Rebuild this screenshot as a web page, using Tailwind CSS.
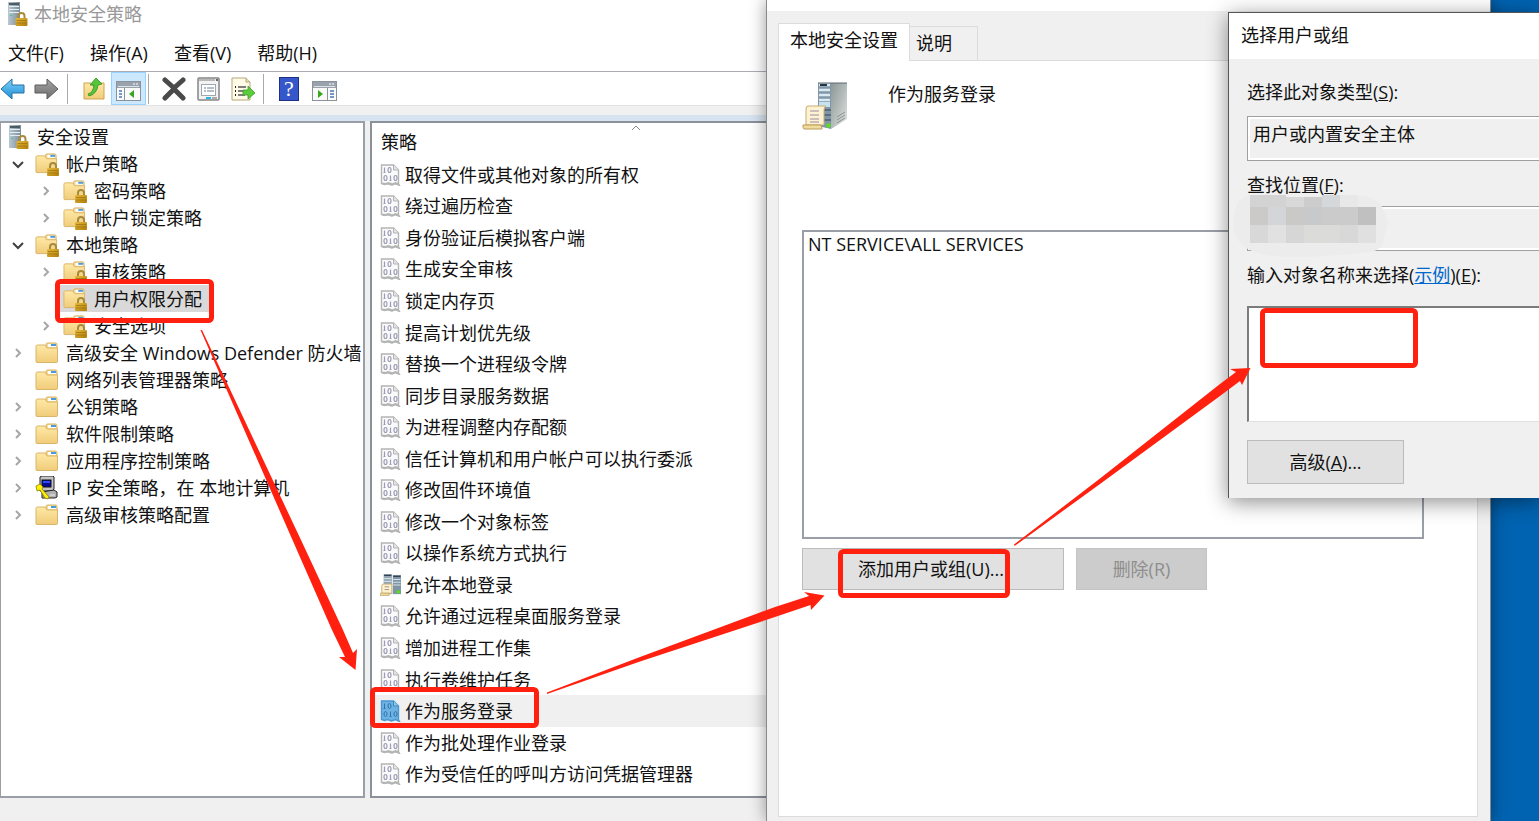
<!DOCTYPE html>
<html lang="zh-CN">
<head>
  <meta charset="UTF-8" />
  <title>本地安全策略</title>
  <meta name="viewport" content="width=device-width, initial-scale=1.0" />
  <script src="https://cdn.jsdelivr.net/npm/@tailwindcss/browser@4"></script>
</head>
<body class="relative h-screen overflow-hidden bg-[#0063b1] font-['Open_Sans','Noto_Sans_CJK_SC',sans-serif] text-[18px] leading-6 text-[#111]">

  <!-- Iconos compartidos -->
  <svg class="absolute h-0 w-0" aria-hidden="true">
    <defs>
      <linearGradient id="gFolder" x1="0" y1="0" x2="0" y2="1"><stop offset="0" stop-color="#ffe9a6"/><stop offset="1" stop-color="#f0cc7a"/></linearGradient>
      <linearGradient id="gLock" x1="0" y1="0" x2="1" y2="1"><stop offset="0" stop-color="#e6b93a"/><stop offset="1" stop-color="#b07d08"/></linearGradient>
      <linearGradient id="gServer" x1="0" y1="0" x2="1" y2="0"><stop offset="0" stop-color="#b9c8d2"/><stop offset="1" stop-color="#7b8c98"/></linearGradient>
      <linearGradient id="gSide" x1="0" y1="0" x2="1" y2="1"><stop offset="0" stop-color="#8d9795"/><stop offset=".5" stop-color="#b4bcba"/><stop offset="1" stop-color="#e3e6e5"/></linearGradient>
      <linearGradient id="gBlue" x1="0" y1="0" x2="0" y2="1"><stop offset="0" stop-color="#7fd0f8"/><stop offset="1" stop-color="#1c8fd8"/></linearGradient>
      <linearGradient id="gGray" x1="0" y1="0" x2="0" y2="1"><stop offset="0" stop-color="#a5a5a5"/><stop offset="1" stop-color="#6c6c6c"/></linearGradient>
    </defs>
    <symbol id="lock" viewBox="0 0 12 14">
      <path d="M3 7V4a3 3 0 0 1 6 0v3" fill="none" stroke="#a88a3c" stroke-width="2"/>
      <rect x="0" y="6" width="12" height="8" rx="1" fill="url(#gLock)"/>
      <path d="M1 8.500h10M1 11h10" stroke="#8f6a0c" stroke-width=".6"/>
    </symbol>
    <symbol id="folder" viewBox="0 0 24 24">
      <path d="M11 5V3.500q0-1.500 1.500-1.500h8q1.500 0 1.500 1.500V8H11z" fill="#f5d991" stroke="#d6b264"/>
      <rect x="13" y="3" width="8" height="3" fill="#fff"/><rect x="16" y="3" width="5" height="2" fill="#4a9ae0"/>
      <path d="M1 5.500Q1 4 2.500 4H10l2 3h10.500v13.500q0 1-1 1H2q-1 0-1-1z" fill="url(#gFolder)" stroke="#d9b56a"/>
    </symbol>
    <symbol id="folder-lock" viewBox="0 0 24 24">
      <use href="#folder" x="0" y="0" width="23" height="23"/>
      <use href="#lock" x="12" y="10" width="12" height="14"/>
    </symbol>
    <symbol id="server-lock" viewBox="0 0 20 24">
      <rect x="0" y="0" width="12" height="23" fill="url(#gServer)"/>
      <path d="M1 1h10v2H1z" fill="#4e5c66"/><path d="M1 4.500h10M1 7.500h10M1 10.500h10" stroke="#e4edf2" stroke-width="1"/>
      <rect x="2" y="13" width="2" height="1" fill="#4c7"/>
      <use href="#lock" x="7" y="10" width="13" height="14"/>
    </symbol>
    <symbol id="doc" viewBox="0 0 20 22">
      <path d="M1 1h12l5 5v14l1 1.500-4-2-4 1.500-4-1.500-3 1-3-1z" fill="#fafafa" stroke="currentColor" stroke-width="1.400"/>
      <path d="M13 1v5h5" fill="#e4e4e4" stroke="currentColor"/>
      <path d="M2 19.500l3 .5 3-1 4 1.500 3-1.500 3 1" fill="none" stroke="currentColor" stroke-width="2"/>
      <g fill="none" stroke="#9c9bb8" stroke-width="1.200">
        <path d="M4 3.500v5M3 8.500h2"/><ellipse cx="9" cy="6" rx="1.500" ry="2.500"/>
        <ellipse cx="5" cy="14" rx="1.500" ry="2.500"/><path d="M10 11.500v5M9 16.500h2"/><ellipse cx="15" cy="14" rx="1.500" ry="2.500"/>
      </g>
    </symbol>
    <symbol id="doc-blue" viewBox="0 0 20 22">
      <path d="M1 1h12l5 5v14l1 1.500-4-2-4 1.500-4-1.500-3 1-3-1z" fill="#6db2e2" stroke="#4a98d0" stroke-width="1.400"/>
      <path d="M13 1v5h5" fill="#8cc6ec" stroke="#3f8cc4"/>
      <g fill="none" stroke="#2f74ac" stroke-width="1">
        <path d="M4 3.500v5M3 8.500h2"/><ellipse cx="9" cy="6" rx="1.500" ry="2.500"/>
        <ellipse cx="5" cy="14" rx="1.500" ry="2.500"/><path d="M10 11.500v5M9 16.500h2"/><ellipse cx="15" cy="14" rx="1.500" ry="2.500"/>
      </g>
    </symbol>
    <symbol id="server-doc" viewBox="0 0 46 48">
      <path d="M16 1l13 0v46l-13-3z" fill="#8197a8"/>
      <path d="M29 1h16v36L29 47z" fill="url(#gSide)"/>
      <path d="M16 1h29" stroke="#5d6a70" stroke-width="1"/>
      <path d="M17 3h11M17 8h11M17 13h11M17 18h11" stroke="#dbe9f1" stroke-width="2.500"/>
      <path d="M18 3h7" stroke="#26343d" stroke-width="2"/>
      <path d="M17 20h11v5H17z" fill="#c6e2ef"/>
      <path d="M22 28h7M22 33h7M22 38h7" stroke="#4d6274" stroke-width="1.500"/>
      <path d="M35 38l8-5M35 41l8-5M35 35l8-5" stroke="#8a9391" stroke-width="1"/>
      <circle cx="26.500" cy="43.500" r="2.200" fill="#5bdc1c"/>
      <path d="M6 24h18q-2 1-2 4v15H4V27q0-3 2-3z" fill="#fdf3d3" stroke="#c9ac72"/>
      <path d="M8 29h9M8 33h9M8 37h9M8 40h9" stroke="#a08aa0" stroke-width="1.200"/>
      <path d="M1 43h17q2 0 2 4H2q-1.500-1.500-1-4z" fill="#f1dc9c" stroke="#b89b5c"/>
    </symbol>
    <symbol id="server-pair" viewBox="0 0 23 24">
      <path d="M4 0h9v22H4z" fill="#93a7b5"/><path d="M14 1h9v21h-9z" fill="#7f94a4"/>
      <path d="M4.500 1.500h8M14.500 2.500h8" stroke="#33434f" stroke-width="1.500"/>
      <path d="M4.500 5h8M4.500 8h8M14.500 6h8M14.500 9h8M14.500 12h8" stroke="#dfeaf0" stroke-width="1"/>
      <rect x="18" y="18" width="4" height="3" fill="#5bdc1c"/>
      <path d="M3 11h10v10H2V12z" fill="#fdf3d3" stroke="#c9ac72"/><path d="M5 14h5M5 17h5" stroke="#a08a70"/>
      <path d="M0 21h10v2.500H0z" fill="#f1dc9c" stroke="#b89b5c" stroke-width=".7"/>
    </symbol>
    <symbol id="ipsec" viewBox="0 0 24 24">
      <path d="M5 1l2-1h11l1 1v12l-2 2H5z" fill="#c4c4c4" stroke="#222"/>
      <rect x="7" y="4" width="9" height="7" fill="#0a0a90" stroke="#111"/><path d="M8 6h7" stroke="#2a4dff" stroke-width="2"/>
      <path d="M7 16l12-2 3 2v5l-2 1H7z" fill="#b0b0b0" stroke="#222"/><path d="M15 19h5" stroke="#eee"/>
      <path d="M1 10l4-2 3 3-1 2 7 8-1 2-3-1-5-8-3 1z" fill="#fff200" stroke="#8a8200" stroke-width=".8"/>
    </symbol>
  </svg>

  <!-- Consola principal -->
  <main class="absolute inset-y-0 left-0 flex w-[768px] flex-col bg-[#f0f0f0]">
    <header class="flex h-[27px] items-center gap-[6px] bg-white pl-2">
      <svg class="h-6 w-5"><use href="#server-lock"/></svg>
      <h1 class="text-[#999]">本地安全策略</h1>
    </header>
    <nav class="flex h-11 items-center gap-[26px] bg-white pt-2 pl-2">
      <button>文件(F)</button>
      <button>操作(A)</button>
      <button>查看(V)</button>
      <button>帮助(H)</button>
    </nav>
    <div class="flex h-[35px] items-center border-t border-b border-t-[#a9adb2] border-b-[#e3e3e3] bg-white">
      <button aria-label="后退" class="mr-[9px]">
        <svg class="h-6 w-[25px]" viewBox="0 0 25 24"><path d="M1 12L12 2v6h12v8H12v6z" fill="url(#gBlue)" stroke="#2b6f9f"/></svg>
      </button>
      <button aria-label="前进" class="mr-2">
        <svg class="h-6 w-[25px]" viewBox="0 0 25 24"><path d="M24 12L13 2v6H1v8h12v6z" fill="url(#gGray)" stroke="#5b5b5b"/></svg>
      </button>
      <span class="mr-[15px] h-[30px] w-px bg-[#aaa]"></span>
      <button aria-label="向上" class="mr-[6px]">
        <svg class="h-6 w-[22px]" viewBox="0 0 22 24">
          <path d="M1 6h7l2 3 2-3h9v16H1z" fill="url(#gFolder)" stroke="#cda54c"/>
          <path d="M5 17q5-1 6-9H7l6-7 6 6-4 1q-1 9-9 11z" fill="#55c53a" stroke="#2f8f22" stroke-width=".8"/>
        </svg>
      </button>
      <button aria-label="显示/隐藏控制台树" class="mr-[2px] flex h-[33px] w-[35px] items-center justify-center border border-[#99d1ff] bg-[#cce8ff]">
        <svg class="mt-1 h-5 w-[25px]" viewBox="0 0 25 20">
          <rect x=".5" y=".5" width="24" height="19" fill="#fafafa" stroke="#8a939b"/>
          <rect x="1" y="1" width="23" height="6" fill="#9aa3ac"/><path d="M2 5.500h21" stroke="#dde3e8"/><path d="M17 3h2M20 3h2" stroke="#fff"/>
          <path d="M3 10h3M3 13h3M3 16h3" stroke="#4a79b5" stroke-width="1.500"/><path d="M8.500 7v12" stroke="#8a939b"/>
          <path d="M18 9v8l-5-4z" fill="#39a51f"/>
        </svg>
      </button>
      <span class="mr-[12px] h-[30px] w-px bg-[#aaa]"></span>
      <button aria-label="删除" class="mr-[10px]">
        <svg class="h-6 w-[26px]" viewBox="0 0 26 24"><path d="M4 3l9 8 9-8M4 21l9-9 9 9" fill="none" stroke="#4a4a4a" stroke-width="5" stroke-linecap="round" stroke-linejoin="round"/></svg>
      </button>
      <button aria-label="属性" class="mr-[11px]">
        <svg class="h-6 w-[23px]" viewBox="0 0 23 24">
          <rect x="1" y="1" width="21" height="22" rx="1" fill="#f3f3f3" stroke="#858585" stroke-width="1.500"/>
          <path d="M2 3h16" stroke="#b8b8b8" stroke-width="2"/><path d="M19 3h2" stroke="#666" stroke-width="2"/>
          <rect x="4.500" y="7.500" width="14" height="11" fill="#fff" stroke="#9da8b5"/>
          <path d="M7 11h2M7 14h2M10 11h7M10 14h7" stroke="#6a7d94"/><path d="M9 21h5" stroke="#25b5e8" stroke-width="2"/><path d="M15 21h5" stroke="#aaa" stroke-width="2"/>
        </svg>
      </button>
      <button aria-label="导出列表" class="mr-[7px]">
        <svg class="h-6 w-[25px]" viewBox="0 0 25 24">
          <path d="M1 1h14l4 4v18H1z" fill="#fffbe6" stroke="#b5a878"/><path d="M15 1v4h4" fill="#e9dfb8" stroke="#b5a878"/>
          <path d="M7 10h8M7 14h7M7 18h7" stroke="#555" stroke-width="1.500"/><path d="M4 10h1M4 14h1M4 18h1" stroke="#222" stroke-width="2"/>
          <path d="M12 13h5v-4l7 7-7 6v-4h-5z" fill="#5ccb3c" stroke="#3c9c28" stroke-width=".8"/>
        </svg>
      </button>
      <span class="mr-[15px] h-[30px] w-px bg-[#aaa]"></span>
      <button aria-label="帮助" class="mr-[13px] flex h-6 w-5 items-center justify-center border border-[#1d2f86] bg-[#3557c9] font-['Liberation_Serif',serif] text-[22px] text-white">?</button>
      <button aria-label="显示/隐藏操作窗格">
        <svg class="mt-1 h-5 w-[25px]" viewBox="0 0 25 20">
          <rect x=".5" y=".5" width="24" height="19" fill="#fafafa" stroke="#8a939b"/>
          <rect x="1" y="1" width="23" height="6" fill="#9aa3ac"/><path d="M2 5.500h21" stroke="#dde3e8"/><path d="M17 3h2M20 3h2" stroke="#fff"/>
          <path d="M18 10h4M18 13h4M18 16h4" stroke="#4a79b5" stroke-width="1.500"/><path d="M15.500 7v12" stroke="#8a939b"/>
          <path d="M6 9v8l5-4z" fill="#39a51f"/>
        </svg>
      </button>
    </div>
    <div class="mt-[9px] h-[6px] bg-[#d6e3f0]"></div>

    <div class="mb-[23px] flex min-h-0 flex-1 gap-[5px]">
      <ul id="tree" class="w-[365px] border-2 border-l border-[#9a9ea6] bg-white whitespace-nowrap"></ul>
      <div class="relative flex-1 border-y-2 border-l-2 border-[#8b9099] bg-white pb-[6px]">
        <svg class="absolute top-[2px] left-[259px] h-[6px] w-[10px]" viewBox="0 0 10 6"><path d="M1 5l4-4 4 4" fill="none" stroke="#888"/></svg>
        <table class="h-full w-full">
          <thead><tr class="h-[36px]"><th class="pt-[2px] pl-[9px] text-left font-normal">策略</th></tr></thead>
          <tbody id="policies"></tbody>
        </table>
      </div>
    </div>
  </main>

  <!-- Propiedades -->
  <section class="absolute inset-y-0 left-[766px] flex w-[725px] flex-col border-x border-[#8a8a8a] bg-[#f0f0f0] shadow-[0_0_16px_rgba(0,0,0,0.4)]">
    <div class="h-[11px] bg-white"></div>
    <div class="ml-[11px] mt-3 flex items-end">
      <button class="z-10 -mb-px h-[38px] w-[132px] border border-b-0 border-[#dcdcdc] bg-white pb-[6px] text-center">本地安全设置</button>
      <button class="h-[34px] w-[68px] border border-b-0 border-l-0 border-[#dcdcdc] pb-px pl-[6px] text-left">说明</button>
    </div>
    <div class="mr-[12px] mb-1 ml-[11px] flex flex-1 flex-col border border-[#dcdcdc] bg-white pt-[21px] pr-[53px] pl-[23px]">
      <div class="flex h-[148px] items-start gap-10">
        <svg class="h-12 w-[46px]"><use href="#server-doc"/></svg>
        <h2>作为服务登录</h2>
      </div>
      <ul class="h-[309px] border-2 border-[#9a9fa7] pl-1">
        <li>NT SERVICE\ALL SERVICES</li>
      </ul>
      <div class="mt-[9px] flex gap-3">
        <button class="h-[42px] w-[262px] border border-[#bbb] bg-[#e1e1e1] pr-1">添加用户或组(U)...</button>
        <button disabled class="h-[42px] w-[131px] border border-[#c4c4c4] bg-[#ccc] text-[#8e8e8e]">删除(R)</button>
      </div>
    </div>
  </section>

  <!-- Selector de usuarios -->
  <section class="absolute top-3 right-0 left-[1228px] flex flex-col border-t border-l border-[#555] bg-[#f0f0f0] pb-[14px] shadow-[0_4px_20px_rgba(0,0,0,0.45)]">
    <h2 class="h-[46px] bg-white pt-[10px] pl-3">选择用户或组</h2>
    <div class="flex flex-col pl-[18px] whitespace-nowrap">
      <label for="objType" class="mt-[21px]">选择此对象类型(<u>S</u>):</label>
      <div class="mt-3 border border-r-0 border-[#a0a0a0]">
        <input id="objType" readonly value="用户或内置安全主体" class="block h-[43px] w-full border-2 border-r-0 border-white pb-3 pl-[3px] outline-none" />
      </div>
      <label for="place" class="mt-3">查找位置(<u>F</u>):</label>
      <div class="relative mt-[9px] border border-r-0 border-[#a0a0a0]">
        <input id="place" readonly class="block h-[43px] w-full border-2 border-r-0 border-white outline-none" />
        <!-- mosaico que tapa el equipo -->
        <svg class="absolute -top-3 -left-4 h-[62px] w-[156px]" viewBox="0 0 156 62">
          <path d="M16 0Q40 2 60 2T100 0H125Q145 2 150 12L156 27 150 50Q146 56 138 57Q110 60 80 62Q40 64 20 56Q2 48 1 28Q1 6 16 0z" fill="#ececec"/>
          <g>
            <path d="M18 0h36v12H18z" fill="#d3d3d3"/><path d="M54 2h18v10H54z" fill="#d8d8d8"/><path d="M72 2h18v10H72z" fill="#cdcdcd"/><path d="M90 0h18v12H90z" fill="#d5d8da"/><path d="M108 0h18v12h-18z" fill="#e8e8e8"/>
            <path d="M18 12h18v18H18z" fill="#cbcac9"/><path d="M36 12h18v18H36z" fill="#d3d5d8"/><path d="M54 12h18v18H54z" fill="#cbc9c7"/><path d="M72 12h18v18H72z" fill="#c8c9cb"/><path d="M90 12h36v18H90z" fill="#cbcbcb"/><path d="M126 12h18v18h-18z" fill="#c0c0c0"/>
            <path d="M18 30h18v18H18z" fill="#d8d8d8"/><path d="M36 30h18v18H36z" fill="#e1e1e1"/><path d="M54 30h18v18H54z" fill="#d6d6d6"/><path d="M72 30h36v18H72z" fill="#dbdbd9"/><path d="M108 30h18v18h-18z" fill="#d8d8d8"/><path d="M126 30h18v18h-18z" fill="#e0e0e0"/>
          </g>
        </svg>
      </div>
      <label for="names" class="mt-3">输入对象名称来选择(<a href="#" class="text-[#0066cc] underline">示例</a>)(<u>E</u>):</label>
      <textarea id="names" class="mt-[19px] block h-[116px] resize-none border-t-2 border-b border-l-2 border-t-[#7c7c7c] border-b-[#e0e0e0] border-l-[#7c7c7c] bg-white outline-none"></textarea>
      <button class="mt-[18px] h-[44px] w-[157px] border border-[#bbb] bg-[#e1e1e1]">高级(<u>A</u>)...</button>
    </div>
  </section>

  <!-- Marcas rojas sobre las ventanas -->
  <svg class="pointer-events-none absolute top-0 left-0 h-[821px] w-[1539px]" viewBox="0 0 1539 821">
    <g fill="none" stroke="#ff2010" stroke-width="5">
      <rect x="57.500" y="281.500" width="154" height="39" rx="3"/>
      <rect x="372.500" y="689.500" width="164" height="36" rx="3"/>
      <rect x="840.500" y="551.500" width="167" height="44" rx="3"/>
      <rect x="1262.500" y="310.500" width="153" height="55" rx="3"/>
    </g>
    <g fill="#ff2010">
      <path d="M200.500 330L202 330 301 540 343 630 353 653 357 649 355.500 670 339 657 345 657 332 630 292.500 540z"/>
      <path d="M547 692.500L640 657 775 607 809 596 804 592 824.500 595.500 811 610 810.500 605 775 617 640 661.500 547 694z"/>
      <path d="M1014 544.500L1100 478.500 1220 384 1236 372 1230 369 1250.500 368 1242 385 1240 381 1220 396 1100 484 1014.500 546z"/>
    </g>
  </svg>

  <script>
    // nivel, flecha (open / closed / none), icono, texto
    const tree = [
      [1, 'open', 'folder-lock', '帐户策略'],
      [2, 'closed', 'folder-lock', '密码策略'],
      [2, 'closed', 'folder-lock', '帐户锁定策略'],
      [1, 'open', 'folder-lock', '本地策略'],
      [2, 'closed', 'folder-lock', '审核策略'],
      [2, 'none', 'folder-lock', '用户权限分配'],
      [2, 'closed', 'folder-lock', '安全选项'],
      [1, 'closed', 'folder', '高级安全 Windows Defender 防火墙'],
      [1, 'none', 'folder', '网络列表管理器策略'],
      [1, 'closed', 'folder', '公钥策略'],
      [1, 'closed', 'folder', '软件限制策略'],
      [1, 'closed', 'folder', '应用程序控制策略'],
      [1, 'closed', 'ipsec', 'IP 安全策略，在 本地计算机'],
      [1, 'closed', 'folder', '高级审核策略配置'],
    ];
    const arrows = {
      open: '<path d="M5 8l5 5 5-5" fill="none" stroke="#404040" stroke-width="2"/>',
      closed: '<path d="M8 6l4 4-4 4" fill="none" stroke="#a6a6a6" stroke-width="2"/>',
      none: '',
    };
    const root = `
      <li class="flex h-[27px] items-center gap-2 pl-2">
        <svg class="h-6 w-5 shrink-0"><use href="#server-lock"/></svg>安全设置
      </li>`;
    document.getElementById('tree').innerHTML = root + tree.map(([level, arrow, icon, text]) => `
      <li class="flex h-[27px] items-center gap-[2px] ${level === 2 ? 'pl-[35px]' : 'pl-[7px]'}">
        <svg class="h-5 w-5 shrink-0" viewBox="0 0 20 20">${arrows[arrow]}</svg>
        <button class="flex h-[27px] shrink-0 items-center gap-[7px] pr-2 pl-[5px] ${text === '用户权限分配' ? 'bg-[#d9d9d9]' : ''}">
          <svg class="h-6 w-6 shrink-0"><use href="#${icon}"/></svg>${text}
        </button>
      </li>`).join('');

    const policies = [
      '取得文件或其他对象的所有权', '绕过遍历检查', '身份验证后模拟客户端', '生成安全审核', '锁定内存页',
      '提高计划优先级', '替换一个进程级令牌', '同步目录服务数据', '为进程调整内存配额', '信任计算机和用户帐户可以执行委派',
      '修改固件环境值', '修改一个对象标签', '以操作系统方式执行', '允许本地登录', '允许通过远程桌面服务登录',
      '增加进程工作集', '执行卷维护任务', '作为服务登录', '作为批处理作业登录', '作为受信任的呼叫方访问凭据管理器',
    ];
    const policyIcon = { '允许本地登录': 'server-pair', '作为服务登录': 'doc-blue' };
    document.getElementById('policies').innerHTML = policies.map(name => `
      <tr class="${name === '作为服务登录' ? 'bg-[#f0f0f0]' : ''}">
        <td class="p-0 pl-2">
          <div class="flex items-center gap-1">
            <svg class="h-[22px] w-[21px] text-[#b4b4b4]"><use href="#${policyIcon[name] || 'doc'}"/></svg>${name}
          </div>
        </td>
      </tr>`).join('');
  </script>
</body>
</html>
